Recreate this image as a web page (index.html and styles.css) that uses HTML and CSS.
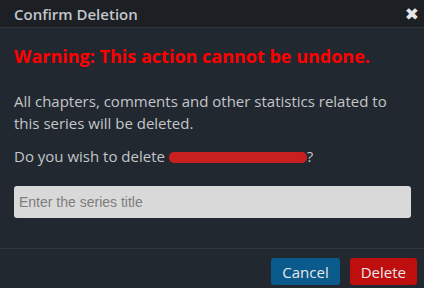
FILE: index.html
```html
<!DOCTYPE html>
<html>
<head>
<meta charset="utf-8">
<link rel="stylesheet" href="styles.css">
</head>
<body>
<div class="modal">
  <div class="modal-header">
    <span class="modal-title">Confirm Deletion</span>
    <span class="close">&#10006;</span>
  </div>
  <div class="modal-body">
    <div class="warning">Warning: This action cannot be undone.</div>
    <p class="info">All chapters, comments and other statistics related to this series will be deleted.</p>
    <p class="ask">Do you wish to delete <span class="redacted"></span>?</p>
    <input class="title-input" type="text" placeholder="Enter the series title">
  </div>
  <div class="modal-footer">
    <button class="btn btn-cancel">Cancel</button>
    <button class="btn btn-delete">Delete</button>
  </div>
</div>
</body>
</html>
```

FILE: styles.css
```css
html, body {
  margin: 0;
  padding: 0;
  background: #222830;
}
.modal {
  width: 424px;
  height: 288px;
  background: #222830;
  font-family: "Open Sans", sans-serif;
  color: #c3c6ca;
  display: flex;
  flex-direction: column;
}
.modal-header {
  height: 27px;
  background: #1c1f24;
  border-bottom: 1px solid #2f353d;
  display: flex;
  align-items: center;
  justify-content: space-between;
  padding: 0 5px 0 14px;
  box-sizing: content-box;
}
.modal-title {
  font-size: 15px;
  font-weight: 600;
  color: #c3c6ca;
}
.close {
  font-size: 17px;
  font-weight: bold;
  color: #e6e6e6;
  font-family: "DejaVu Sans", sans-serif;
}
.modal-body {
  padding: 16px 14px 0 14px;
  flex: 1;
}
.warning {
  color: #ff0000;
  font-weight: bold;
  font-size: 18px;
  line-height: 24px;
}
.info {
  margin: 22px 0 0 0;
  font-size: 15px;
  line-height: 22px;
}
.ask {
  margin: 11px 0 0 0;
  font-size: 15px;
  line-height: 22px;
}
.redacted {
  display: inline-block;
  width: 138px;
  height: 11px;
  background: #c82020;
  border-radius: 5px;
  vertical-align: middle;
}
.title-input {
  display: block;
  margin-top: 19px;
  width: 397px;
  height: 32px;
  box-sizing: border-box;
  border: none;
  border-radius: 3px;
  background: #d9d9d9;
  padding: 0 5px;
  font-family: "Liberation Sans", Arial, sans-serif;
  font-size: 14px;
}
.title-input::placeholder {
  color: #7d7d7d;
}
.modal-footer {
  border-top: 1px solid #2f353d;
  height: 40px;
  display: flex;
  justify-content: flex-end;
  align-items: flex-start;
  gap: 10px;
  padding: 9px 7px 0 0;
  box-sizing: border-box;
}
.btn {
  font-family: "Open Sans", sans-serif;
  font-size: 15px;
  color: #e8e8e8;
  border: none;
  border-radius: 3px;
  height: 27px;
  padding: 0 11px;
}
.btn-cancel {
  background: #0b5a8c;
}
.btn-delete {
  background: #bf0e0e;
}
```
